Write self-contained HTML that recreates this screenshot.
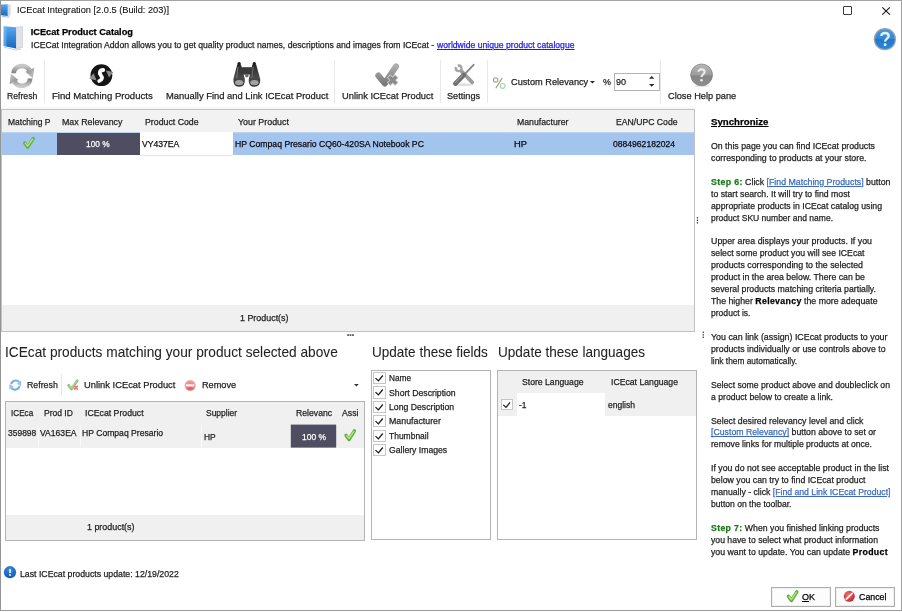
<!DOCTYPE html>
<html>
<head>
<meta charset="utf-8">
<title>ICEcat Integration</title>
<style>
html,body{margin:0;padding:0;background:#fff;}
body{width:902px;height:612px;overflow:hidden;font-family:"Liberation Sans",sans-serif;color:#1a1a1a;}
#w{position:relative;width:902px;height:612px;overflow:hidden;will-change:transform;}
.t{position:absolute;white-space:pre;line-height:20px;height:20px;transform-origin:0 50%;color:#1e1e1e;-webkit-text-stroke:0.25px;}
.b{position:absolute;box-sizing:border-box;}
svg{position:absolute;overflow:visible;}
</style>
</head>
<body>
<div id="w">
<!-- window frame -->
<div class="b" style="left:0;top:0;width:902px;height:611px;border:1px solid #a2a2a2;border-left:1.3px solid #959595;border-bottom:1.4px solid #9a9a9a;"></div>
<!-- toolbar separators -->
<div class="b" style="left:44px;top:60px;width:1px;height:43px;background:#e8e8e8;"></div>
<div class="b" style="left:334px;top:60px;width:1px;height:43px;background:#e8e8e8;"></div>
<div class="b" style="left:440px;top:60px;width:1px;height:43px;background:#e8e8e8;"></div>
<div class="b" style="left:487px;top:60px;width:1px;height:43px;background:#e8e8e8;"></div>
<div class="b" style="left:660.4px;top:60px;width:1px;height:43px;background:#e6e6e6;"></div>
<!-- toolbar bottom shade -->
<div class="b" style="left:1px;top:106px;width:694px;height:3.5px;background:linear-gradient(#fff,#f1f1f1);"></div>
<!-- relevancy input -->
<div class="b" style="left:614px;top:73px;width:46px;height:17.6px;border:1px solid #b4b4b4;background:#fff;"></div>
<svg style="left:649.2px;top:76.4px" width="5.4" height="11" viewBox="0 0 5.4 11"><path d="M0 2.8 L2.7 0 L5.4 2.8 Z" fill="#2a2a2a"/><path d="M0 8 L2.7 10.8 L5.4 8 Z" fill="#2a2a2a"/></svg>
<svg style="left:590.4px;top:80.7px" width="4.8" height="2.6" viewBox="0 0 4.8 2.6"><path d="M0 0 H4.8 L2.4 2.6 Z" fill="#222"/></svg>

<!-- upper grid -->
<div class="b" style="left:1px;top:109.4px;width:694px;height:222.4px;border:1px solid #c2c2c2;background:#fff;"></div>
<div class="b" style="left:2px;top:110.4px;width:692px;height:22.2px;background:#f2f2f2;"></div>
<div class="b" style="left:2px;top:132.4px;width:691.8px;height:22.2px;background:linear-gradient(#c4daf3,#a3c4ec 1.6px,#a3c4ec);"></div>
<div class="b" style="left:56.8px;top:132.6px;width:83.2px;height:22px;background:#4f4d62;"></div>
<div class="b" style="left:140px;top:132px;width:93.1px;height:23.6px;background:#fff;border-bottom:1px solid #e6e6e6;"></div>
<div class="b" style="left:2px;top:305px;width:692px;height:26px;background:#f0f0f0;"></div>
<!-- splitter dots -->
<svg style="left:0;top:0" width="902" height="612" viewBox="0 0 902 612"><g fill="#3c3c3c">
<rect x="347.2" y="334.3" width="1.7" height="1.6"/><rect x="349.65" y="334.3" width="1.7" height="1.6"/><rect x="352.1" y="334.3" width="1.7" height="1.6"/>
<rect x="696.8" y="217.1" width="1.3" height="1.4"/><rect x="696.8" y="219.6" width="1.3" height="1.4"/><rect x="696.8" y="222.1" width="1.3" height="1.4"/>
<rect x="702.6" y="331.6" width="1.3" height="1.4"/><rect x="702.6" y="334.1" width="1.3" height="1.4"/><rect x="702.6" y="336.6" width="1.3" height="1.4"/>
</g></svg>

<!-- lower toolbar separator + dropdown -->
<div class="b" style="left:61px;top:374px;width:1px;height:21px;background:#e8e8e8;"></div>
<svg style="left:354.3px;top:384.2px" width="4.8" height="2.6" viewBox="0 0 4.8 2.6"><path d="M0 0 H4.8 L2.4 2.6 Z" fill="#333"/></svg>

<!-- lower grid -->
<div class="b" style="left:4.5px;top:401px;width:360.3px;height:140px;border:1px solid #b4b4b4;background:#fff;"></div>
<div class="b" style="left:5.5px;top:402px;width:358.3px;height:45.6px;background:#f0f0f0;"></div>
<div class="b" style="left:38px;top:425px;width:1px;height:22px;background:#fafafa;"></div>
<div class="b" style="left:79.5px;top:425px;width:1px;height:22px;background:#fafafa;"></div>
<div class="b" style="left:201px;top:425px;width:1px;height:22px;background:#fafafa;"></div>
<svg style="left:0;top:0" width="902" height="612"><rect x="290.8" y="424.6" width="45.4" height="23" fill="#4f4d62"/></svg>
<div class="b" style="left:5.5px;top:515px;width:358.3px;height:25px;background:#f0f0f0;"></div>

<!-- fields list -->
<div class="b" style="left:371.2px;top:370.1px;width:119.8px;height:170.4px;border:1px solid #b4b4b4;background:#fff;"></div>
<!-- languages grid -->
<div class="b" style="left:497px;top:370.3px;width:199.6px;height:170.2px;border:1px solid #b4b4b4;background:#fff;"></div>
<div class="b" style="left:498px;top:371.3px;width:197.6px;height:44.9px;background:#f0f0f0;"></div>
<div class="b" style="left:517px;top:393.4px;width:87.8px;height:22.8px;background:#fff;"></div>

<!-- buttons -->
<div class="b" style="left:771px;top:587px;width:60px;height:19.5px;border:1px solid #adadad;background:#fcfcfc;box-shadow:inset 0 0 0 1px #f0f0f0;"></div>
<div class="b" style="left:835px;top:587px;width:60px;height:19.5px;border:1px solid #adadad;background:#fcfcfc;box-shadow:inset 0 0 0 1px #f0f0f0;"></div>

<!-- window controls -->
<div class="b" style="left:843.2px;top:6.1px;width:8.8px;height:8.8px;border:1.1px solid #3a3a3a;border-radius:1px;"></div>
<svg style="left:881.8px;top:7px" width="8.2" height="8" viewBox="0 0 8.2 8"><path d="M0.3 0.3 L7.9 7.7 M7.9 0.3 L0.3 7.7" stroke="#1c1c1c" stroke-width="1.15" fill="none"/></svg>
<div class="b" style="left:372.9px;top:371.9px;width:13px;height:12.4px;border:1px solid #c6c6c6;background:#fff;"></div><svg style="left:372.9px;top:371.9px" width="13" height="12.4" viewBox="0 0 13 12.4"><path d="M2.5 6.1 L5.4 8.9 L9.8 3.5" fill="none" stroke="#1a1a1a" stroke-width="1.3"/></svg>
<div class="b" style="left:372.9px;top:386.3px;width:13px;height:12.4px;border:1px solid #c6c6c6;background:#fff;"></div><svg style="left:372.9px;top:386.3px" width="13" height="12.4" viewBox="0 0 13 12.4"><path d="M2.5 6.1 L5.4 8.9 L9.8 3.5" fill="none" stroke="#1a1a1a" stroke-width="1.3"/></svg>
<div class="b" style="left:372.9px;top:400.7px;width:13px;height:12.4px;border:1px solid #c6c6c6;background:#fff;"></div><svg style="left:372.9px;top:400.7px" width="13" height="12.4" viewBox="0 0 13 12.4"><path d="M2.5 6.1 L5.4 8.9 L9.8 3.5" fill="none" stroke="#1a1a1a" stroke-width="1.3"/></svg>
<div class="b" style="left:372.9px;top:415.1px;width:13px;height:12.4px;border:1px solid #c6c6c6;background:#fff;"></div><svg style="left:372.9px;top:415.1px" width="13" height="12.4" viewBox="0 0 13 12.4"><path d="M2.5 6.1 L5.4 8.9 L9.8 3.5" fill="none" stroke="#1a1a1a" stroke-width="1.3"/></svg>
<div class="b" style="left:372.9px;top:429.5px;width:13px;height:12.4px;border:1px solid #c6c6c6;background:#fff;"></div><svg style="left:372.9px;top:429.5px" width="13" height="12.4" viewBox="0 0 13 12.4"><path d="M2.5 6.1 L5.4 8.9 L9.8 3.5" fill="none" stroke="#1a1a1a" stroke-width="1.3"/></svg>
<div class="b" style="left:372.9px;top:443.9px;width:13px;height:12.4px;border:1px solid #c6c6c6;background:#fff;"></div><svg style="left:372.9px;top:443.9px" width="13" height="12.4" viewBox="0 0 13 12.4"><path d="M2.5 6.1 L5.4 8.9 L9.8 3.5" fill="none" stroke="#1a1a1a" stroke-width="1.3"/></svg>
<div class="b" style="left:500.5px;top:398.6px;width:12.0px;height:11.9px;border:1px solid #c6c6c6;background:#fff;"></div><svg style="left:500.5px;top:398.6px" width="12.0" height="11.9" viewBox="0 0 13 12.4"><path d="M2.5 6.1 L5.4 8.9 L9.8 3.5" fill="none" stroke="#1a1a1a" stroke-width="1.3"/></svg>
<svg style="left:0;top:0" width="902" height="612" viewBox="0 0 902 612">
<defs>
<linearGradient id="gGray" x1="0" y1="0" x2="0" y2="1"><stop offset="0" stop-color="#c8c8c8"/><stop offset="1" stop-color="#7e7e7e"/></linearGradient>
<linearGradient id="gGray2" x1="0" y1="0" x2="1" y2="1"><stop offset="0" stop-color="#8a8a8a"/><stop offset="1" stop-color="#c6c6c6"/></linearGradient>
<linearGradient id="gBlue" x1="0" y1="0" x2="0" y2="1"><stop offset="0" stop-color="#58a8ee"/><stop offset="1" stop-color="#1668c0"/></linearGradient>
<linearGradient id="gBlueH" x1="0" y1="0" x2="1" y2="0"><stop offset="0" stop-color="#6ab4f2"/><stop offset="0.25" stop-color="#3a90e0"/><stop offset="1" stop-color="#1a6cc6"/></linearGradient>
<radialGradient id="gHelpB" cx="0.5" cy="0.3" r="0.75"><stop offset="0" stop-color="#5aa8e8"/><stop offset="0.6" stop-color="#2476c4"/><stop offset="1" stop-color="#1a5ea6"/></radialGradient>
<radialGradient id="gHelpG" cx="0.5" cy="0.25" r="0.8"><stop offset="0" stop-color="#c2c2c2"/><stop offset="0.55" stop-color="#8a8a8a"/><stop offset="1" stop-color="#5e5e5e"/></radialGradient>
<linearGradient id="gGreen" x1="0" y1="0" x2="1" y2="1"><stop offset="0" stop-color="#a6e27c"/><stop offset="1" stop-color="#4c9a2e"/></linearGradient>
<radialGradient id="gRed" cx="0.5" cy="0.8" r="0.8"><stop offset="0" stop-color="#e25a62"/><stop offset="1" stop-color="#efa4a6"/></radialGradient>
<radialGradient id="gRed2" cx="0.4" cy="0.35" r="0.75"><stop offset="0" stop-color="#f07070"/><stop offset="1" stop-color="#c02028"/></radialGradient>
<radialGradient id="gInfo" cx="0.5" cy="0.3" r="0.8"><stop offset="0" stop-color="#3a8ee4"/><stop offset="0.7" stop-color="#1762bc"/><stop offset="1" stop-color="#0e4c9c"/></radialGradient>
<linearGradient id="gBino" x1="0" y1="0" x2="0" y2="1"><stop offset="0" stop-color="#2a2a2a"/><stop offset="0.6" stop-color="#4a4a4a"/><stop offset="1" stop-color="#2e2e2e"/></linearGradient>
</defs>

<!-- title bar icon -->
<g>
<path d="M1 4.6 L7.8 4.2 L7.8 16 L1 15.2 Z" fill="url(#gBlue)"/>
<path d="M7.8 4.2 L10.6 4.8 L10.6 15.2 L7.8 16 Z" fill="#d4d8de"/>
<path d="M2 16.6 L9.5 17" stroke="#2a6cb8" stroke-width="0.8" opacity="0.6"/>
</g>
<!-- header icon -->
<g>
<path d="M16 27.3 L22.6 26.6 L22.6 47.4 L16 48.6 Z" fill="#dfe3e8"/>
<path d="M16 27.3 L22.6 26.6 L22.6 47.4 L16 48.6 Z" fill="none" stroke="#c2c8d0" stroke-width="0.6"/>
<path d="M3.7 26.3 L16 27.3 L16 48.6 L3.7 46 Z" fill="url(#gBlue)"/>
<path d="M3.7 26.3 L6.5 26.5 L6.5 46.6 L3.7 46 Z" fill="#7cc0f6" opacity="0.55"/>
<path d="M4 47.2 L16 50 L21 49" stroke="#9fb8d0" stroke-width="0.9" fill="none" opacity="0.7"/>
</g>
<!-- help (blue) -->
<g>
<linearGradient id="gHB2" x1="0" y1="0" x2="0" y2="1"><stop offset="0" stop-color="#4a98d8"/><stop offset="0.48" stop-color="#3388d0"/><stop offset="0.52" stop-color="#1f78cc"/><stop offset="1" stop-color="#2f86d6"/></linearGradient>
<circle cx="884.9" cy="39.2" r="11.1" fill="#97a3b2"/>
<circle cx="884.9" cy="39.2" r="9.9" fill="url(#gHB2)"/>
<path d="M881.3 35.9 C881.3 32.1 888.7 32.1 888.7 36 C888.7 38.6 885.1 38.7 885.1 41.6" fill="none" stroke="#e2f0fe" stroke-width="2.4"/>
<circle cx="885.1" cy="44.7" r="1.45" fill="#e2f0fe"/>
</g>
<!-- close help (gray) -->
<g>
<linearGradient id="gHG2" x1="0" y1="0" x2="0" y2="1"><stop offset="0" stop-color="#b8b8b8"/><stop offset="0.5" stop-color="#9c9c9c"/><stop offset="0.54" stop-color="#858585"/><stop offset="1" stop-color="#8e8e8e"/></linearGradient>
<ellipse cx="701.6" cy="86" rx="8" ry="1.2" fill="#000" opacity="0.10"/>
<circle cx="701.6" cy="74.9" r="10.9" fill="url(#gHG2)" stroke="#7c7c7c" stroke-width="0.7"/>
<path d="M698.4 71.8 C698.4 68.6 704.6 68.6 704.6 71.9 C704.6 74.2 701.5 74.3 701.5 77" fill="none" stroke="#ececec" stroke-width="2.1"/>
<circle cx="701.5" cy="80.3" r="1.3" fill="#ececec"/>
</g>

<!-- refresh (big gray) -->
<g transform="translate(21.9 75.9) scale(0.99 0.94) translate(-21.9 -76)">
<g id="rfa">
<path d="M13.6 73.2 C13.8 65 24.6 62.6 29.6 69.6" fill="none" stroke="url(#gGray)" stroke-width="4.8"/>
<path d="M25.4 71.6 L34.4 67.2 L33 78.4 Z" fill="url(#gGray2)"/>
</g>
<g transform="rotate(180 21.9 76)">
<path d="M13.6 73.2 C13.8 65 24.6 62.6 29.6 69.6" fill="none" stroke="url(#gGray)" stroke-width="4.8"/>
<path d="M25.4 71.6 L34.4 67.2 L33 78.4 Z" fill="url(#gGray2)"/>
</g>
</g>

<!-- find matching (black sync) -->
<g>
<circle cx="101.4" cy="75.2" r="10.9" fill="#151515"/>
<path d="M103.2 70 C99.8 70.2 98.8 73 100.8 75.2 C102.8 77.4 102.2 80.2 99.2 81" fill="none" stroke="#fff" stroke-width="3.8" stroke-linecap="round"/>
<path d="M106 70.6 L113.4 72 L109 77.4 Z" fill="#8c8c8c"/>
<path d="M96.6 80.4 L89.2 78.6 L93.6 73.2 Z" fill="#8c8c8c"/>
</g>

<!-- binoculars -->
<g>
<path d="M237.2 64.4 L241 64.4 L244.8 79 Q245.6 86.8 239.2 86.8 Q232.8 86.8 233.4 79 Z" fill="url(#gBino)"/>
<path d="M252.4 64.4 L256.2 64.4 L260.2 79 Q260.8 86.8 254.4 86.8 Q248 86.8 248.8 79 Z" fill="url(#gBino)"/>
<rect x="240.4" y="67.2" width="12.6" height="7.4" fill="#3a3a3a"/>
<circle cx="246.8" cy="75.6" r="1.8" fill="#6a6a6a"/>
<circle cx="239.1" cy="63.8" r="1.7" fill="#1c1c1c"/><circle cx="254.3" cy="63.8" r="1.7" fill="#1c1c1c"/>
<ellipse cx="239.2" cy="82.6" rx="4.2" ry="2.6" fill="#b4b4b4" opacity="0.85"/>
<ellipse cx="254.4" cy="82.6" rx="4.2" ry="2.6" fill="#b4b4b4" opacity="0.85"/>
<path d="M238 67 L236.6 78" stroke="#8a8a8a" stroke-width="1" opacity="0.7"/>
<path d="M253.2 67 L251.8 78" stroke="#8a8a8a" stroke-width="1" opacity="0.7"/>
</g>

<!-- unlink (gray check + x) -->
<g>
<linearGradient id="gChk" x1="0" y1="0" x2="0" y2="1"><stop offset="0" stop-color="#adadad"/><stop offset="1" stop-color="#7a7a7a"/></linearGradient>
<path d="M378.4 75.6 L384.8 83.4 L396 66.4" fill="none" stroke="url(#gChk)" stroke-width="6.2" stroke-linecap="round" stroke-linejoin="round"/>
<path d="M388.6 76 L396.8 84.2 M396.8 76 L388.6 84.2" stroke="#c9c9c9" stroke-width="5" stroke-linecap="butt"/>
<path d="M389.2 76.6 L396.2 83.6 M396.2 76.6 L389.2 83.6" stroke="#8a8a8a" stroke-width="3.2" stroke-linecap="butt"/>
</g>

<!-- settings (wrench + screwdriver) -->
<g>
<ellipse cx="463.8" cy="84.8" rx="8.5" ry="1.5" fill="#000" opacity="0.13"/>
<!-- wrench: head top-left with jaw open to top-left, handle to bottom-right -->
<path d="M460.4 70 L472.2 82.4" stroke="#9c9c9c" stroke-width="3.8" stroke-linecap="round"/>
<circle cx="458.6" cy="68.2" r="4" fill="#a4a4a4"/>
<path d="M458.8 68.6 L452.6 65.6 L456.4 61.6 Z" fill="#fff"/>
<circle cx="458.8" cy="68.4" r="1.5" fill="#fff"/>
<!-- screwdriver: tip top-right, handle bottom-left -->
<path d="M473.6 64.8 L464 74.8" stroke="#868686" stroke-width="1.9" stroke-linecap="round"/>
<path d="M463.6 75.2 L455.4 83.6" stroke="#6e6e6e" stroke-width="4.6" stroke-linecap="round"/>
<path d="M462.6 75.2 L455.6 82.4" stroke="#9a9a9a" stroke-width="1.1" stroke-linecap="round"/>
</g>

<!-- percent icon -->
<g fill="none" stroke-width="1.15">
<circle cx="495.7" cy="79.9" r="2.2" stroke="#9aa690"/>
<path d="M502.2 78 L495.8 88.2" stroke="#8b976e"/>
<circle cx="502.6" cy="85.9" r="2.4" stroke="#a8d6aa"/>
</g>

<!-- green check: upper grid -->
<g id="gck">
<path d="M24.8 143 L27.8 147.2 L33.2 138.6" fill="none" stroke="#62ad3c" stroke-width="3.4" stroke-linecap="round" stroke-linejoin="round"/>
<path d="M25.4 143.2 L27.8 146.2 L32.6 139" fill="none" stroke="#aee488" stroke-width="1.5" stroke-linecap="round" stroke-linejoin="round"/>
</g>
<!-- green check: lower grid -->
<g transform="translate(321.2 292.3)">
<path d="M24.8 143 L27.8 147.2 L33.2 138.6" fill="none" stroke="#62ad3c" stroke-width="3.4" stroke-linecap="round" stroke-linejoin="round"/>
<path d="M25.4 143.2 L27.8 146.2 L32.6 139" fill="none" stroke="#aee488" stroke-width="1.5" stroke-linecap="round" stroke-linejoin="round"/>
</g>
<!-- green check: OK button -->
<g transform="translate(763.6 453.3)">
<path d="M24.8 143 L27.8 147.2 L33.2 138.6" fill="none" stroke="#62ad3c" stroke-width="3.4" stroke-linecap="round" stroke-linejoin="round"/>
<path d="M25.4 143.2 L27.8 146.2 L32.6 139" fill="none" stroke="#aee488" stroke-width="1.5" stroke-linecap="round" stroke-linejoin="round"/>
</g>

<!-- small refresh (blue) -->
<g opacity="0.9">
<g id="srfa">
<path d="M11.2 384.2 C11.8 380.4 17 379.4 19.2 382.2" fill="none" stroke="#6ba8de" stroke-width="2.1"/>
<path d="M17 383.8 L21.2 380.4 L21.2 386.2 Z" fill="#8abce6"/>
</g>
<g transform="rotate(180 15.3 385.1)">
<path d="M11.2 384.2 C11.8 380.4 17 379.4 19.2 382.2" fill="none" stroke="#6ba8de" stroke-width="2.1"/>
<path d="M17 383.8 L21.2 380.4 L21.2 386.2 Z" fill="#8abce6"/>
</g>
</g>
<!-- small unlink (green check + red x) -->
<g>
<path d="M68.6 385.4 L71.6 389 L77.2 380.8" fill="none" stroke="#92c67c" stroke-width="2.9" stroke-linecap="round" stroke-linejoin="round"/>
<path d="M69.2 385.4 L71.6 388 L76.6 381.2" fill="none" stroke="#b4dca0" stroke-width="1" stroke-linecap="round" stroke-linejoin="round"/>
<path d="M74.2 385.8 L77.8 389.6 M77.8 385.8 L74.2 389.6" stroke="#e87878" stroke-width="1.6"/>
</g>
<!-- remove (red minus) -->
<g>
<circle cx="190.2" cy="385.5" r="5.8" fill="#f3c4c4"/>
<circle cx="190.2" cy="385.6" r="5" fill="url(#gRed)"/>
<rect x="186" y="384.3" width="8.4" height="2.1" rx="0.6" fill="#fff" opacity="0.9"/>
</g>
<!-- info icon -->
<g>
<circle cx="10" cy="572.2" r="6.1" fill="url(#gInfo)"/>
<rect x="9.2" y="568.9" width="1.7" height="4.2" rx="0.7" fill="#fff" opacity="0.95"/>
<circle cx="10.05" cy="575" r="0.95" fill="#fff" opacity="0.95"/>
</g>
<!-- cancel icon -->
<g>
<circle cx="849.3" cy="596.3" r="5.5" fill="url(#gRed2)"/>
<path d="M846.4 599 L852.2 593.4" stroke="#fff" stroke-width="1.8" stroke-linecap="round" opacity="0.9"/>
</g>
</svg>

<span class="t" style="left:17.00px;top:-0.20px;font-size:9.8px;color:#111;transform:scaleX(0.9429);-webkit-text-stroke:0.1px;">ICEcat Integration [2.0.5 (Build: 203)]</span>
<span class="t" style="left:30.80px;top:21.61px;font-size:9.2px;font-weight:bold;color:#000;">ICEcat Product Catalog</span>
<span class="t" style="left:30.80px;top:35.08px;font-size:9.0px;transform:scaleX(0.9606);">ICECat Integration Addon allows you to get quality product names, descriptions and images from ICEcat -</span>
<span class="t" style="left:437.00px;top:35.08px;font-size:9.0px;color:#1c1ce6;text-decoration:underline;transform:scaleX(0.9575);">worldwide unique product catalogue</span>
<span class="t" style="left:6.80px;top:85.50px;font-size:9.8px;transform:scaleX(0.8831);">Refresh</span>
<span class="t" style="left:51.60px;top:85.50px;font-size:9.8px;transform:scaleX(0.9794);">Find Matching Products</span>
<span class="t" style="left:165.70px;top:85.50px;font-size:9.8px;transform:scaleX(0.9583);">Manually Find and Link ICEcat Product</span>
<span class="t" style="left:342.00px;top:85.50px;font-size:9.8px;transform:scaleX(0.9526);">Unlink ICEcat Product</span>
<span class="t" style="left:447.00px;top:85.50px;font-size:9.8px;transform:scaleX(0.9349);">Settings</span>
<span class="t" style="left:510.70px;top:72.20px;font-size:9.8px;transform:scaleX(0.9390);">Custom Relevancy</span>
<span class="t" style="left:603.00px;top:72.40px;font-size:9.8px;transform:scaleX(0.9176);">%</span>
<span class="t" style="left:615.90px;top:72.40px;font-size:9.8px;transform:scaleX(0.9261);">90</span>
<span class="t" style="left:667.60px;top:85.80px;font-size:9.8px;transform:scaleX(0.9415);">Close Help pane</span>
<span class="t" style="left:7.50px;top:111.68px;font-size:9.0px;transform:scaleX(0.9416);">Matching P</span>
<span class="t" style="left:61.90px;top:111.68px;font-size:9.0px;transform:scaleX(0.9816);">Max Relevancy</span>
<span class="t" style="left:144.60px;top:111.68px;font-size:9.0px;transform:scaleX(0.9737);">Product Code</span>
<span class="t" style="left:238.10px;top:111.68px;font-size:9.0px;transform:scaleX(0.9845);">Your Product</span>
<span class="t" style="left:517.20px;top:111.68px;font-size:9.0px;transform:scaleX(0.9692);">Manufacturer</span>
<span class="t" style="left:616.40px;top:111.68px;font-size:9.0px;transform:scaleX(0.9605);">EAN/UPC Code</span>
<span class="t" style="left:86.20px;top:133.68px;font-size:9.0px;color:#fff;transform:scaleX(0.9244);">100 %</span>
<span class="t" style="left:141.60px;top:133.68px;font-size:9.0px;color:#111;transform:scaleX(0.9556);">VY437EA</span>
<span class="t" style="left:235.10px;top:133.68px;font-size:9.0px;color:#0a0a14;transform:scaleX(0.9616);">HP Compaq Presario CQ60-420SA Notebook PC</span>
<span class="t" style="left:514.00px;top:133.68px;font-size:9.0px;color:#0a0a14;transform:scaleX(1.0387);">HP</span>
<span class="t" style="left:613.00px;top:133.68px;font-size:9.0px;color:#0a0a14;transform:scaleX(0.9527);">0884962182024</span>
<span class="t" style="left:240.00px;top:308.38px;font-size:9.0px;transform:scaleX(0.9892);">1 Product(s)</span>
<span class="t" style="left:710.50px;top:111.64px;font-size:9.4px;font-weight:bold;color:#000;text-decoration:underline;transform:scaleX(1.0314);">Synchronize</span>
<span class="t" style="left:710.50px;top:135.88px;font-size:9.0px;transform:scaleX(0.9727);">On this page you can find ICEcat products</span>
<span class="t" style="left:710.50px;top:147.82px;font-size:9.0px;transform:scaleX(0.9774);">corresponding to products at your store.</span>
<span class="t" style="left:710.50px;top:171.70px;font-size:9.0px;transform:scaleX(0.9753);"><span style="color:#1a7a1a;font-weight:bold;letter-spacing:0.35px;">Step 6:</span> Click <span style="color:#3c6bbd;text-decoration:underline;">[Find Matching Products]</span> button</span>
<span class="t" style="left:710.50px;top:183.64px;font-size:9.0px;transform:scaleX(0.9683);">to start search. It will try to find most</span>
<span class="t" style="left:710.50px;top:195.58px;font-size:9.0px;transform:scaleX(0.9655);">appropriate products in ICEcat catalog using</span>
<span class="t" style="left:710.50px;top:207.52px;font-size:9.0px;transform:scaleX(0.9452);">product SKU number and name.</span>
<span class="t" style="left:710.50px;top:231.40px;font-size:9.0px;transform:scaleX(0.9811);">Upper area displays your products. If you</span>
<span class="t" style="left:710.50px;top:243.34px;font-size:9.0px;transform:scaleX(0.9649);">select some product you will see ICEcat</span>
<span class="t" style="left:710.50px;top:255.28px;font-size:9.0px;transform:scaleX(0.9800);">products corresponding to the selected</span>
<span class="t" style="left:710.50px;top:267.22px;font-size:9.0px;transform:scaleX(0.9719);">product in the area below. There can be</span>
<span class="t" style="left:710.50px;top:279.16px;font-size:9.0px;transform:scaleX(0.9711);">several products matching criteria partially.</span>
<span class="t" style="left:710.50px;top:291.10px;font-size:9.0px;transform:scaleX(0.9721);">The higher <span style="color:#000;font-weight:bold;letter-spacing:0.35px;">Relevancy</span> the more adequate</span>
<span class="t" style="left:710.50px;top:303.04px;font-size:9.0px;transform:scaleX(0.9511);">product is.</span>
<span class="t" style="left:710.50px;top:326.92px;font-size:9.0px;transform:scaleX(0.9846);">You can link (assign) ICEcat products to your</span>
<span class="t" style="left:710.50px;top:338.86px;font-size:9.0px;transform:scaleX(0.9716);">products individually or use controls above to</span>
<span class="t" style="left:710.50px;top:350.80px;font-size:9.0px;transform:scaleX(0.9260);">link them automatically.</span>
<span class="t" style="left:710.50px;top:374.68px;font-size:9.0px;transform:scaleX(0.9617);">Select some product above and doubleclick on</span>
<span class="t" style="left:710.50px;top:386.62px;font-size:9.0px;transform:scaleX(0.9600);">a product below to create a link.</span>
<span class="t" style="left:710.50px;top:410.50px;font-size:9.0px;transform:scaleX(0.9740);">Select desired relevancy level and click</span>
<span class="t" style="left:710.50px;top:422.44px;font-size:9.0px;transform:scaleX(0.9701);"><span style="color:#3c6bbd;text-decoration:underline;">[Custom Relevancy]</span> button above to set or</span>
<span class="t" style="left:710.50px;top:434.38px;font-size:9.0px;transform:scaleX(0.9550);">remove links for multiple products at once.</span>
<span class="t" style="left:710.50px;top:458.26px;font-size:9.0px;transform:scaleX(0.9720);">If you do not see acceptable product in the list</span>
<span class="t" style="left:710.50px;top:470.20px;font-size:9.0px;transform:scaleX(0.9711);">below you can try to find ICEcat product</span>
<span class="t" style="left:710.50px;top:482.14px;font-size:9.0px;transform:scaleX(0.9646);">manually - click <span style="color:#3c6bbd;text-decoration:underline;">[Find and Link ICEcat Product]</span></span>
<span class="t" style="left:710.50px;top:494.08px;font-size:9.0px;transform:scaleX(0.9518);">button on the toolbar.</span>
<span class="t" style="left:710.50px;top:517.96px;font-size:9.0px;transform:scaleX(0.9680);"><span style="color:#1a7a1a;font-weight:bold;letter-spacing:0.35px;">Step 7:</span> When you finished linking products</span>
<span class="t" style="left:710.50px;top:529.90px;font-size:9.0px;transform:scaleX(0.9619);">you have to select what product information</span>
<span class="t" style="left:710.50px;top:541.84px;font-size:9.0px;transform:scaleX(0.9721);">you want to update. You can update <span style="color:#000;font-weight:bold;letter-spacing:0.35px;">Product</span></span>
<span class="t" style="left:5.00px;top:342.14px;font-size:14.6px;color:#222;transform:scaleX(0.9388);-webkit-text-stroke:0.05px;">ICEcat products matching your product selected above</span>
<span class="t" style="left:371.60px;top:341.94px;font-size:14.6px;color:#222;transform:scaleX(0.9275);-webkit-text-stroke:0.05px;">Update these fields</span>
<span class="t" style="left:497.50px;top:341.94px;font-size:14.6px;color:#222;transform:scaleX(0.9290);-webkit-text-stroke:0.05px;">Update these languages</span>
<span class="t" style="left:26.60px;top:375.10px;font-size:9.8px;transform:scaleX(0.8976);">Refresh</span>
<span class="t" style="left:84.00px;top:375.10px;font-size:9.8px;transform:scaleX(0.9536);">Unlink ICEcat Product</span>
<span class="t" style="left:201.50px;top:375.10px;font-size:9.8px;transform:scaleX(0.9346);">Remove</span>
<span class="t" style="left:10.60px;top:403.48px;font-size:9.0px;transform:scaleX(0.9055);">ICEca</span>
<span class="t" style="left:43.90px;top:403.48px;font-size:9.0px;transform:scaleX(0.9471);">Prod ID</span>
<span class="t" style="left:85.30px;top:403.48px;font-size:9.0px;transform:scaleX(0.9681);">ICEcat Product</span>
<span class="t" style="left:206.40px;top:403.48px;font-size:9.0px;transform:scaleX(0.9415);">Supplier</span>
<span class="t" style="left:295.80px;top:403.48px;font-size:9.0px;transform:scaleX(0.9645);">Relevanc</span>
<span class="t" style="left:341.90px;top:403.48px;font-size:9.0px;transform:scaleX(0.9697);">Assi</span>
<span class="t" style="left:7.80px;top:422.88px;font-size:9.0px;transform:scaleX(0.9419);">359898</span>
<span class="t" style="left:40.30px;top:422.88px;font-size:9.0px;transform:scaleX(0.9537);">VA163EA</span>
<span class="t" style="left:81.90px;top:422.88px;font-size:9.0px;transform:scaleX(0.9555);">HP Compaq Presario</span>
<span class="t" style="left:203.60px;top:426.78px;font-size:9.0px;transform:scaleX(0.9348);">HP</span>
<span class="t" style="left:301.70px;top:426.78px;font-size:9.0px;color:#fff;transform:scaleX(0.9439);">100 %</span>
<span class="t" style="left:86.50px;top:517.38px;font-size:9.0px;transform:scaleX(0.9889);">1 product(s)</span>
<span class="t" style="left:388.70px;top:368.28px;font-size:9.0px;transform:scaleX(0.9202);">Name</span>
<span class="t" style="left:388.70px;top:382.68px;font-size:9.0px;transform:scaleX(0.9662);">Short Description</span>
<span class="t" style="left:388.70px;top:397.08px;font-size:9.0px;transform:scaleX(0.9653);">Long Description</span>
<span class="t" style="left:388.70px;top:411.48px;font-size:9.0px;transform:scaleX(0.9787);">Manufacturer</span>
<span class="t" style="left:388.70px;top:425.88px;font-size:9.0px;transform:scaleX(0.9422);">Thumbnail</span>
<span class="t" style="left:388.70px;top:440.28px;font-size:9.0px;transform:scaleX(0.9615);">Gallery Images</span>
<span class="t" style="left:522.00px;top:371.88px;font-size:9.0px;transform:scaleX(0.9600);">Store Language</span>
<span class="t" style="left:610.50px;top:371.88px;font-size:9.0px;transform:scaleX(0.9632);">ICEcat Language</span>
<span class="t" style="left:518.50px;top:395.38px;font-size:9.0px;transform:scaleX(0.9357);">-1</span>
<span class="t" style="left:607.50px;top:395.38px;font-size:9.0px;transform:scaleX(0.9463);">english</span>
<span class="t" style="left:20.20px;top:564.08px;font-size:9.0px;transform:scaleX(0.9705);">Last ICEcat products update: 12/19/2022</span>
<span class="t" style="left:802.00px;top:587.38px;font-size:9.0px;color:#000;transform:scaleX(0.9976);"><span style="text-decoration:underline">O</span>K</span>
<span class="t" style="left:858.50px;top:587.38px;font-size:9.0px;color:#000;transform:scaleX(0.9816);">Cancel</span>
</div>
</body>
</html>
